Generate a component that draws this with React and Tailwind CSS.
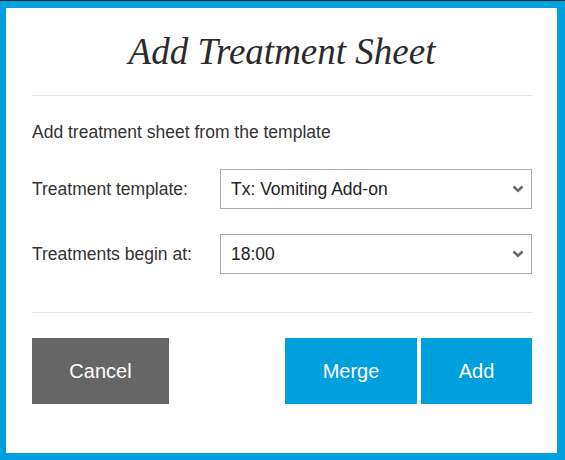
import React from 'react';

const Chevron = () => (
  <svg width="12" height="8" viewBox="0 0 12 8" className="shrink-0">
    <path d="M1.5 1.5 L6 5.8 L10.5 1.5" fill="none" stroke="#6b6b6b" strokeWidth="2.6" />
  </svg>
);

function SelectBox({ value }) {
  return (
    <div className="flex-1 h-10 border border-[#a9a9a9] bg-white flex items-center justify-between pl-[10px] pr-[7px] text-[17.5px] text-[#222]">
      <span>{value}</span>
      <Chevron />
    </div>
  );
}

function Row({ label, value }) {
  return (
    <div className="flex items-center">
      <div className="w-[188px] text-[17.5px] text-[#333]">{label}</div>
      <SelectBox value={value} />
    </div>
  );
}

export default function App() {
  return (
    <div className="w-[565px] h-[460px] bg-[#2a2a2a] pt-px" style={{ fontFamily: '"Liberation Sans", Arial, sans-serif' }}>
      <div className="h-[459px] bg-white border-[#00a0df] border-l-[6px] border-r-[8px] border-t-[7px] border-b-[7px] pl-[26px] pr-[25px] flex flex-col">
        <h1
          className="mt-[24px] h-[40px] leading-[40px] text-center italic text-[37px] text-[#2b2b2b]"
          style={{ fontFamily: '"Liberation Serif", Georgia, serif' }}
        >
          Add Treatment Sheet
        </h1>
        <div className="mt-[23px] h-px bg-[#e2e2e2]" />
        <p className="mt-[24px] leading-[24px] text-[17.5px] text-[#333]">Add treatment sheet from the template</p>
        <div className="mt-[25px] flex flex-col gap-[25px]">
          <Row label="Treatment template:" value="Tx: Vomiting Add-on" />
          <Row label="Treatments begin at:" value="18:00" />
        </div>
        <div className="mt-[38px] h-px bg-[#e2e2e2]" />
        <div className="mt-[25px] flex items-center text-white text-[20px]">
          <button className="w-[137px] h-[66px] bg-[#666666]">Cancel</button>
          <div className="flex-1" />
          <button className="w-[132px] h-[66px] bg-[#00a0df]">Merge</button>
          <button className="ml-[4px] w-[111px] h-[66px] bg-[#00a0df]">Add</button>
        </div>
      </div>
    </div>
  );
}
